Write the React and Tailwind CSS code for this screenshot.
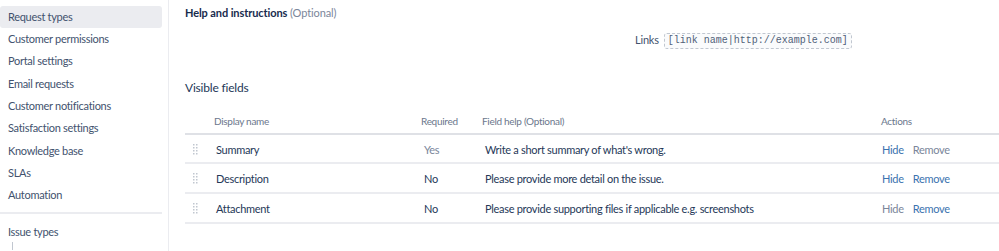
import React from "react";

const nav = [
  "Request types",
  "Customer permissions",
  "Portal settings",
  "Email requests",
  "Customer notifications",
  "Satisfaction settings",
  "Knowledge base",
  "SLAs",
  "Automation",
];

const rows = [
  { name: "Summary", req: "Yes", reqGrey: true, help: "Write a short summary of what's wrong.", hide: true, remove: false },
  { name: "Description", req: "No", reqGrey: false, help: "Please provide more detail on the issue.", hide: true, remove: true },
  { name: "Attachment", req: "No", reqGrey: false, help: "Please provide supporting files if applicable e.g. screenshots", hide: false, remove: true },
];

function Grip() {
  return (
    <svg width="5" height="11" viewBox="0 0 5 11" className="block">
      {[0, 1].map((c) =>
        [0, 1, 2, 3].map((r) => (
          <rect key={c + "-" + r} x={c * 3} y={r * 3} width="1.5" height="1.5" fill="#c1c7d0" />
        ))
      )}
    </svg>
  );
}

export default function App() {
  return (
    <div className="flex w-[999px] h-[251px] overflow-hidden bg-white text-[#253858] font-['Lato',sans-serif]">
      <aside className="w-[162px] shrink-0 pt-[6px]">
        {nav.map((n, i) => (
          <div
            key={n}
            className={`h-[22.3px] flex items-center pl-[8px] text-[11px] tracking-[-0.3px] text-[#42526e] rounded-[3px] ${i === 0 ? "bg-[#ebecf0]" : ""}`}
          >
            {n}
          </div>
        ))}
        <div className="mt-[5px] border-t-2 border-[#ebecf0]" />
        <div className="pl-[8px] pt-[10px] text-[11px] tracking-[-0.3px] text-[#42526e]">Issue types</div>
        <div className="ml-[12px] mt-[2px] w-px h-[8px] bg-[#c1c7d0]" />
      </aside>
      <div className="ml-[6px] w-px bg-[#ebecf0] shrink-0" />
      <main className="flex-1 pl-[16px] pt-[5px]">
        <div className="text-[11px] tracking-[-0.1px]">
          <span className="font-bold text-[#172b4d]">Help and instructions</span>{" "}
          <span className="text-[#7a869a]">(Optional)</span>
        </div>
        <div className="flex items-center pl-[450px] mt-[11px] h-[16px]">
          <span className="text-[11px] tracking-[-0.2px] text-[#42526e] mr-[5px]">Links</span>
          <span className="font-['Liberation_Mono',monospace] text-[10px] text-[#505f79] border border-dashed border-[#c1c7d0] rounded-[3px] px-[3px] py-[1px] bg-[#fafbfc] leading-[12px]">
            [link name|http://example.com]
          </span>
        </div>
        <div className="mt-[30px] text-[12px] tracking-[-0.2px] text-[#253858]">Visible fields</div>
        <div className="mt-[14px] w-[814px]">
          <div className="flex items-center h-[24px] border-b-2 border-[#dfe1e6] text-[10px] tracking-[-0.3px] text-[#6b778c]">
            <div className="w-[29px]" />
            <div className="w-[207px]">Display name</div>
            <div className="w-[61px]">Required</div>
            <div className="w-[399px]">Field help (Optional)</div>
            <div>Actions</div>
          </div>
          {rows.map((r) => (
            <div key={r.name} className="flex items-center h-[29.7px] pt-[3px] border-b-2 border-[#ebecf0] text-[11px] tracking-[-0.3px]">
              <div className="w-[31px] pl-[8px] self-start pt-[6px]">
                <Grip />
              </div>
              <div className="w-[208px]">{r.name}</div>
              <div className={`w-[61px] ${r.reqGrey ? "text-[#7a869a]" : ""}`}>{r.req}</div>
              <div className="w-[397px]">{r.help}</div>
              <div className="flex gap-[9px]">
                <span className={r.hide ? "text-[#3b73af]" : "text-[#7a869a]"}>Hide</span>
                <span className={r.remove ? "text-[#3b73af]" : "text-[#7a869a]"}>Remove</span>
              </div>
            </div>
          ))}
        </div>
      </main>
    </div>
  );
}
